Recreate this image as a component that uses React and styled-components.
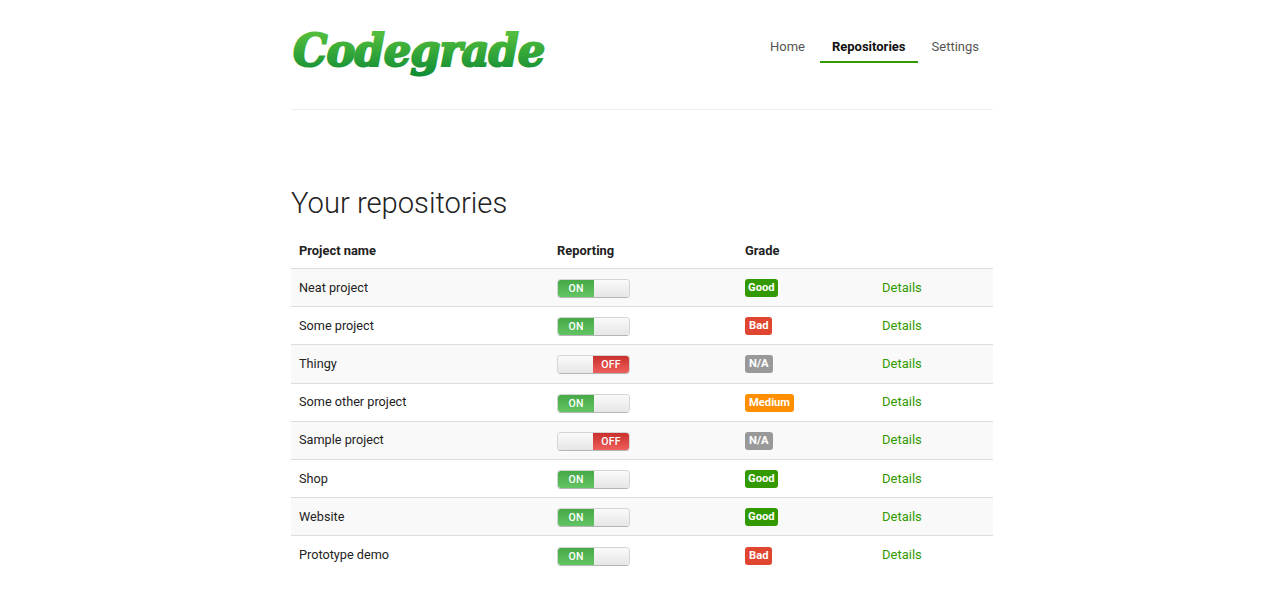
import styled, { createGlobalStyle } from 'styled-components';

const GlobalStyle = createGlobalStyle`
  body {
    margin: 0;
    background: #fff;
    font-family: Roboto, "Liberation Sans", sans-serif;
    color: #222;
  }
`;

const Page = styled.div`
  width: 702px;
  margin: 0 0 0 291px;
  padding-bottom: 26px;
`;

const Header = styled.header`
  height: 109px;
  display: flex;
  justify-content: space-between;
  align-items: flex-start;
  border-bottom: 1px solid #eee;
`;

const LogoSvg = styled.svg`
  display: block;
  margin-top: 20px;
`;

const Nav = styled.nav`
  display: flex;
  margin: 28px 14px 0 0;
`;

const NavItem = styled.a`
  display: block;
  height: 33px;
  margin-left: ${(p) => (p.$active ? '15px' : '0')};
  margin-right: ${(p) => (p.$active ? '14px' : '0')};
  padding: 0 ${(p) => (p.$active ? '12px' : '0')};
  font-size: 13px;
  line-height: 37px;
  font-weight: ${(p) => (p.$active ? 700 : 400)};
  color: ${(p) => (p.$active ? '#111' : '#555')};
  border-bottom: 2px solid ${(p) => (p.$active ? '#339900' : 'transparent')};
`;

const Title = styled.h1`
  margin: 76px 0 0;
  font-size: 29.2px;
  line-height: 34px;
  font-weight: 300;
  color: #222;
`;

const Table = styled.table`
  width: 702px;
  margin-top: 13px;
  border-collapse: collapse;
  table-layout: fixed;
  font-size: 12.7px;
`;

const Th = styled.th`
  height: 34px;
  padding: 0 8px 1px;
  text-align: left;
  font-size: 12.9px;
  font-weight: 700;
  color: #222;
  border-bottom: 1px solid #ddd;
`;

const Row = styled.tr`
  height: 38.2px;
  background: ${(p) => (p.$odd ? '#f9f9f9' : '#fff')};
  border-bottom: 1px solid #ddd;

  &:last-child {
    border-bottom: 0;
  }
`;

const Td = styled.td`
  padding: 0 8px 1px;
  color: #222;
`;

const Toggle = styled.div`
  display: flex;
  width: 73px;
  height: 19px;
  margin-top: 3px;
  border-radius: 4px;
  overflow: hidden;
  border: 1px solid #d4d4d4;
  border-bottom-color: #b5b5b5;
  box-sizing: border-box;
`;

const ToggleState = styled.span`
  width: 36px;
  text-align: center;
  font-size: 10.5px;
  line-height: 17px;
  font-weight: 500;
  letter-spacing: 0.2px;
  color: #fff;
  background: ${(p) =>
    p.$on
      ? 'linear-gradient(#46a846, #62c462)'
      : 'linear-gradient(#c9302c, #ee5f5b)'};
`;

const ToggleKnob = styled.span`
  flex: 1;
  background: linear-gradient(#fafafa, #e6e6e6);
`;

const gradeColors = {
  Good: '#339900',
  Bad: '#e04530',
  'N/A': '#999999',
  Medium: '#ff8f00',
};

const Badge = styled.span`
  display: inline-block;
  height: 18px;
  margin-top: 2px;
  padding: 0 ${(p) => (p.$grade === 'Good' ? '3px' : '4px')};
  border-radius: 3px;
  font-size: 11.2px;
  line-height: 18px;
  font-weight: 700;
  color: #fff;
  vertical-align: middle;
  background: ${(p) => gradeColors[p.$grade]};
`;

const DetailsLink = styled.a`
  font-size: 13px;
  color: #339900;
  text-decoration: none;
`;

const repos = [
  { name: 'Neat project', on: true, grade: 'Good' },
  { name: 'Some project', on: true, grade: 'Bad' },
  { name: 'Thingy', on: false, grade: 'N/A' },
  { name: 'Some other project', on: true, grade: 'Medium' },
  { name: 'Sample project', on: false, grade: 'N/A' },
  { name: 'Shop', on: true, grade: 'Good' },
  { name: 'Website', on: true, grade: 'Good' },
  { name: 'Prototype demo', on: true, grade: 'Bad' },
];

const Logo = () => (
  <LogoSvg width="256" height="62" viewBox="0 0 256 62">
    <defs>
      <linearGradient id="logoFill" gradientUnits="userSpaceOnUse" x1="0" y1="-34" x2="0" y2="12">
        <stop offset="0" stopColor="#52bd3c" />
        <stop offset="1" stopColor="#0e8a35" />
      </linearGradient>
    </defs>
    <text
      transform="translate(2 46) scale(0.92 0.94)"
      fontFamily="'DejaVu Serif', serif"
      fontStyle="italic"
      fontWeight="700"
      fontSize="47"
      letterSpacing="-1"
      fill="url(#logoFill)"
      stroke="url(#logoFill)"
      strokeWidth="2.2"
    >
      Codegrade
    </text>
  </LogoSvg>
);

const App = () => (
  <Page>
    <GlobalStyle />
    <Header>
      <Logo />
      <Nav>
        <NavItem>Home</NavItem>
        <NavItem $active>Repositories</NavItem>
        <NavItem>Settings</NavItem>
      </Nav>
    </Header>
    <Title>Your repositories</Title>
    <Table>
      <colgroup>
        <col width="258" />
        <col width="188" />
        <col width="137" />
        <col width="119" />
      </colgroup>
      <thead>
        <tr>
          <Th>Project name</Th>
          <Th>Reporting</Th>
          <Th>Grade</Th>
          <Th />
        </tr>
      </thead>
      <tbody>
        {repos.map((repo, i) => (
          <Row key={repo.name} $odd={i % 2 === 0}>
            <Td>{repo.name}</Td>
            <Td>
              <Toggle>
                {repo.on ? (
                  <>
                    <ToggleState $on>ON</ToggleState>
                    <ToggleKnob />
                  </>
                ) : (
                  <>
                    <ToggleKnob />
                    <ToggleState>OFF</ToggleState>
                  </>
                )}
              </Toggle>
            </Td>
            <Td>
              <Badge $grade={repo.grade}>{repo.grade}</Badge>
            </Td>
            <Td>
              <DetailsLink>Details</DetailsLink>
            </Td>
          </Row>
        ))}
      </tbody>
    </Table>
  </Page>
);

export default App;
